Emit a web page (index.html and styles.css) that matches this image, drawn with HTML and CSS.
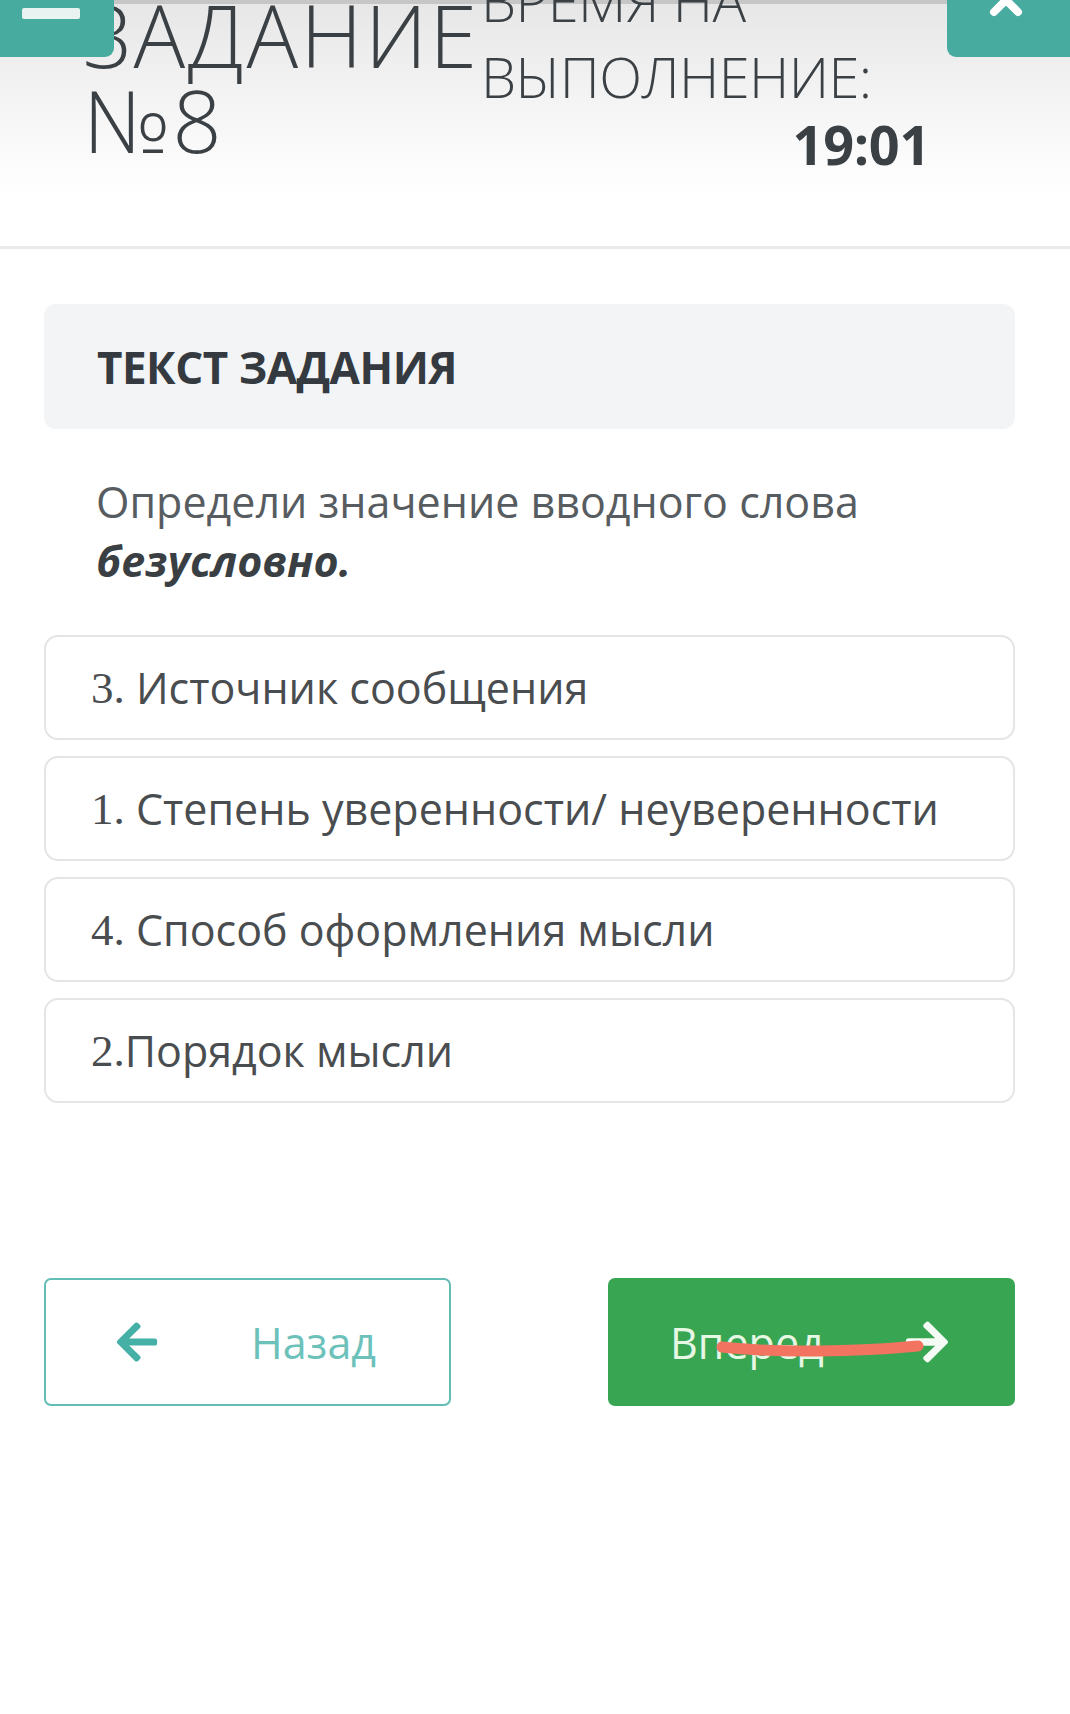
FILE: index.html
```html
<!DOCTYPE html>
<html lang="ru">
<head>
<meta charset="utf-8">
<title>Задание №8</title>
<link rel="stylesheet" href="styles.css">
</head>
<body>
<div class="page">
  <header class="topbar">
    <div class="topbar-inner">
      <h1 class="task-title">ЗАДАНИЕ №8</h1>
      <div class="timer">
        <div class="timer-label">ВРЕМЯ НА ВЫПОЛНЕНИЕ:</div>
        <div class="timer-value">19:01</div>
      </div>
    </div>
    <button class="corner-btn corner-left" aria-label="Меню"><span class="menu-bar"></span></button>
    <button class="corner-btn corner-right" aria-label="Закрыть">
      <svg class="close-icon" viewBox="0 0 40 40" width="40" height="40"><path d="M8 8 L32 32 M32 8 L8 32" stroke="#fff" stroke-width="8" stroke-linecap="round" fill="none"/></svg>
    </button>
  </header>

  <main class="content">
    <section class="task-head">
      <h2>ТЕКСТ ЗАДАНИЯ</h2>
    </section>
    <p class="question">Определи значение вводного слова <b><i>безусловно.</i></b></p>

    <div class="options">
      <div class="option"><span class="num">3.</span> Источник сообщения</div>
      <div class="option"><span class="num">1.</span> Степень уверенности/ неуверенности</div>
      <div class="option"><span class="num">4.</span> Способ оформления мысли</div>
      <div class="option"><span class="num">2.</span>Порядок мысли</div>
    </div>

    <div class="nav">
      <button class="btn btn-back">
        <svg class="arr" viewBox="0 0 448 512" width="46" height="46"><path fill="#45b0a6" d="M257.5 445.1l-22.2 22.2c-9.4 9.4-24.6 9.4-33.9 0L7 273c-9.4-9.4-9.4-24.6 0-33.9L201.4 44.7c9.4-9.4 24.6-9.4 33.9 0l22.2 22.2c9.5 9.5 9.3 25-.4 34.3L136.6 216H424c13.3 0 24 10.7 24 24v32c0 13.3-10.7 24-24 24H136.6l120.5 114.8c9.8 9.3 10 24.8.4 34.3z"/></svg>
        <span class="btn-text">Назад</span>
      </button>
      <button class="btn btn-next">
        <span class="btn-text">Вперед</span>
        <svg class="arr" viewBox="0 0 448 512" width="48" height="48"><path fill="#f4fbf4" d="M190.5 66.9l22.2-22.2c9.4-9.4 24.6-9.4 33.9 0L441 239c9.4 9.4 9.4 24.6 0 33.9L246.6 467.3c-9.4 9.4-24.6 9.4-33.9 0l-22.2-22.2c-9.5-9.5-9.3-25 .4-34.3L311.4 296H24c-13.3 0-24-10.7-24-24v-32c0-13.3 10.7-24 24-24h287.4L190.9 101.2c-9.8-9.3-10-24.8-.4-34.3z"/></svg>
        <svg class="scribble" viewBox="0 0 210 20" width="210" height="20"><path d="M6 7 C 60 13, 140 12, 202 6" stroke="#f2735f" stroke-width="11" stroke-linecap="round" fill="none"/></svg>
      </button>
    </div>
  </main>
</div>
</body>
</html>
```
FILE: styles.css
```css
* { box-sizing: border-box; }
html, body { margin: 0; padding: 0; background: #fff; }
body { font-family: "Open Sans", "Noto Sans", sans-serif; color: #3d4349; }

.page { width: 1070px; min-height: 1714px; overflow: hidden; }

.topbar {
  position: relative;
  height: 249px;
  border-top: 4px solid #c6c6c6;
  border-bottom: 3px solid #e9e9e9;
  background: linear-gradient(#e7e7e7 0, #f3f3f3 90px, #fdfdfd 170px, #fff 200px);
}
.topbar-inner {
  display: flex;
  padding-left: 83px;
  margin-top: -4px;
}
.task-title {
  margin: -8px 0 0 0;
  width: 398px;
  flex: none;
  font-size: 86px;
  line-height: 85px;
  font-weight: 300;
  color: #3b4045;
  letter-spacing: 2.5px;
}
.timer { width: 449px; flex: none; margin-top: -38px; }
.timer-label {
  font-size: 56px;
  line-height: 76px;
  font-weight: 300;
  color: #3b4045;
  letter-spacing: -0.6px;
}
.timer-value {
  text-align: right;
  font-size: 54px;
  line-height: 60px;
  font-weight: 700;
  color: #3b4045;
  letter-spacing: -0.3px;
}

.corner-btn {
  position: absolute;
  top: -4px;
  height: 57px;
  border: 0;
  padding: 0;
  background: #47ab9f;
}
.corner-left { left: 0; width: 114px; border-bottom-right-radius: 9px; }
.corner-right { left: 947px; width: 123px; border-bottom-left-radius: 9px; overflow: hidden; }
.menu-bar {
  position: absolute; left: 22px; top: 8px; width: 58px; height: 11px;
  background: #e9f3f1; border-radius: 2px;
}
.close-icon { position: absolute; left: 39px; top: -20px; }

.content { padding: 55px 55px 0 44px; }

.task-head {
  height: 125px;
  background: #f3f4f6;
  border-radius: 12px;
  display: flex;
  align-items: center;
  padding-left: 53px;
}
.task-head h2 {
  margin: 0;
  font-size: 44px;
  font-weight: 700;
  color: #343a40;
  letter-spacing: -0.5px;
}

.question {
  margin: 43px 0 0 0;
  padding-left: 52px;
  font-size: 43px;
  line-height: 59px;
  color: #575c61;
}
.question b { color: #3a3f44; }

.options { display: flex; flex-direction: column; gap: 16px; margin-top: 45px; }
.option {
  height: 105px;
  border: 2px solid #e5e5e5;
  border-radius: 14px;
  display: flex;
  align-items: center;
  padding-left: 45px;
  font-size: 43px;
  color: #4a4d50;
  white-space: pre;
}
.num { font-family: "Liberation Serif", "DejaVu Serif", serif; font-size: 45px; }

.nav { display: flex; justify-content: space-between; margin-top: 175px; }
.btn {
  position: relative;
  width: 407px;
  height: 128px;
  border-radius: 7px;
  font-family: "Open Sans", sans-serif;
  font-size: 43px;
  display: flex;
  align-items: center;
  padding: 0;
}
.btn-back {
  background: #fff;
  border: 2px solid #62bdb5;
  color: #6cc2ba;
  padding-left: 68px;
  gap: 91px;
}
.btn-next {
  background: #38a553;
  border: 0;
  color: #e6f7e4;
  padding-left: 62px;
  gap: 79px;
}
.scribble { position: absolute; left: 108px; top: 62px; }
```
